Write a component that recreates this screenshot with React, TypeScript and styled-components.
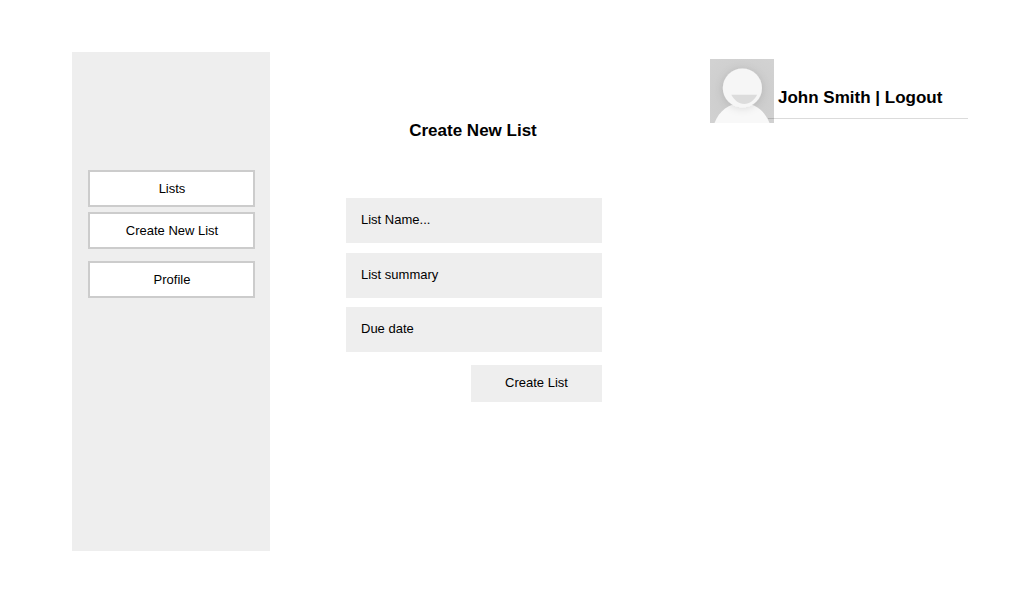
import React from "react";
import styled, { createGlobalStyle } from "styled-components";

const GlobalStyle = createGlobalStyle`
  body {
    margin: 0;
    background: #fff;
    color: #000;
    font-family: "Liberation Sans", Arial, sans-serif;
    font-size: 13px;
    line-height: 15px;
  }
  *, *::before, *::after { box-sizing: border-box; }
`;

const Page = styled.div`
  display: grid;
  grid-template-columns: 198px 256px 258px;
  column-gap: 76px;
  align-items: start;
  width: 1032px;
  height: 593px;
  padding: 52px 0 0 72px;
`;

const Sidebar = styled.nav`
  display: flex;
  flex-direction: column;
  height: 499px;
  padding: 118px 15px 0 16px;
  background: #eee;
`;

const NavButton = styled.button<{ $gap?: number }>`
  height: 37px;
  margin: ${({ $gap = 0 }) => $gap}px 0 0;
  padding: 0 0 0 1px;
  border: 2px solid #ccc;
  background: #fff;
  color: inherit;
  font: inherit;
`;

const Form = styled.form`
  display: flex;
  flex-direction: column;
  padding-top: 69px;
`;

const Title = styled.h1`
  margin: 0 0 57px;
  padding-right: 2px;
  font-size: 17px;
  line-height: 20px;
  text-align: center;
`;

const Field = styled.label<{ $gap?: number }>`
  height: 45px;
  margin-top: ${({ $gap = 0 }) => $gap}px;
  padding: 14px 15px;
  background: #eee;
`;

const SubmitButton = styled.button`
  align-self: flex-end;
  width: 131px;
  height: 37px;
  margin: 13px 0 0;
  padding: 0 0 2px;
  border: 0;
  background: #eee;
  color: inherit;
  font: inherit;
`;

const UserBar = styled.header`
  display: flex;
  align-items: flex-start;
  width: 258px;
  margin-left: 32px;
  padding-top: 7px;
`;

const Avatar = styled.svg`
  flex: none;
  width: 64px;
  height: 64px;
`;

const UserLinks = styled.div`
  position: relative;
  z-index: 1;
  flex: none;
  width: 200px;
  height: 60px;
  margin-left: -6px;
  padding: 29px 0 0 10px;
  border-bottom: 1px solid rgba(0, 0, 0, 0.14);
  font-size: 17px;
  font-weight: bold;
  line-height: 20px;
  white-space: nowrap;
`;

export default function App() {
  return (
    <>
      <GlobalStyle />
      <Page>
        <Sidebar>
          <NavButton>Lists</NavButton>
          <NavButton $gap={5}>Create New List</NavButton>
          <NavButton $gap={12}>Profile</NavButton>
        </Sidebar>
        <Form>
          <Title>Create New List</Title>
          <Field>List Name...</Field>
          <Field $gap={10}>List summary</Field>
          <Field $gap={9}>Due date</Field>
          <SubmitButton type="button">Create List</SubmitButton>
        </Form>
        <UserBar>
          <Avatar viewBox="0 0 64 64" aria-hidden="true">
            <defs>
              <radialGradient id="backdrop" gradientUnits="userSpaceOnUse" cx="32" cy="38" r="46">
                <stop offset="0.4" stopColor="#cdcdcd" />
                <stop offset="1" stopColor="#d2d2d2" />
              </radialGradient>
              <filter id="headShadow" x="-50%" y="-50%" width="200%" height="200%">
                <feDropShadow dx="0" dy="1" stdDeviation="4" floodColor="#000" floodOpacity="0.12" />
              </filter>
            </defs>
            <rect width="64" height="64" fill="url(#backdrop)" />
            <path d="M4.500 64C9 52 19 44 32 44s23 8 27.500 20z" fill="#f8f8f8" />
            <circle cx="32.400" cy="29" r="19.600" fill="#f6f6f6" filter="url(#headShadow)" />
            <path d="M21.300 35.800h25.900c-3 5.600-7.500 9.200-12.950 9.200s-9.950-3.600-12.950-9.200z" fill="#dcdcdc" />
          </Avatar>
          <UserLinks>John Smith | Logout</UserLinks>
        </UserBar>
      </Page>
    </>
  );
}
